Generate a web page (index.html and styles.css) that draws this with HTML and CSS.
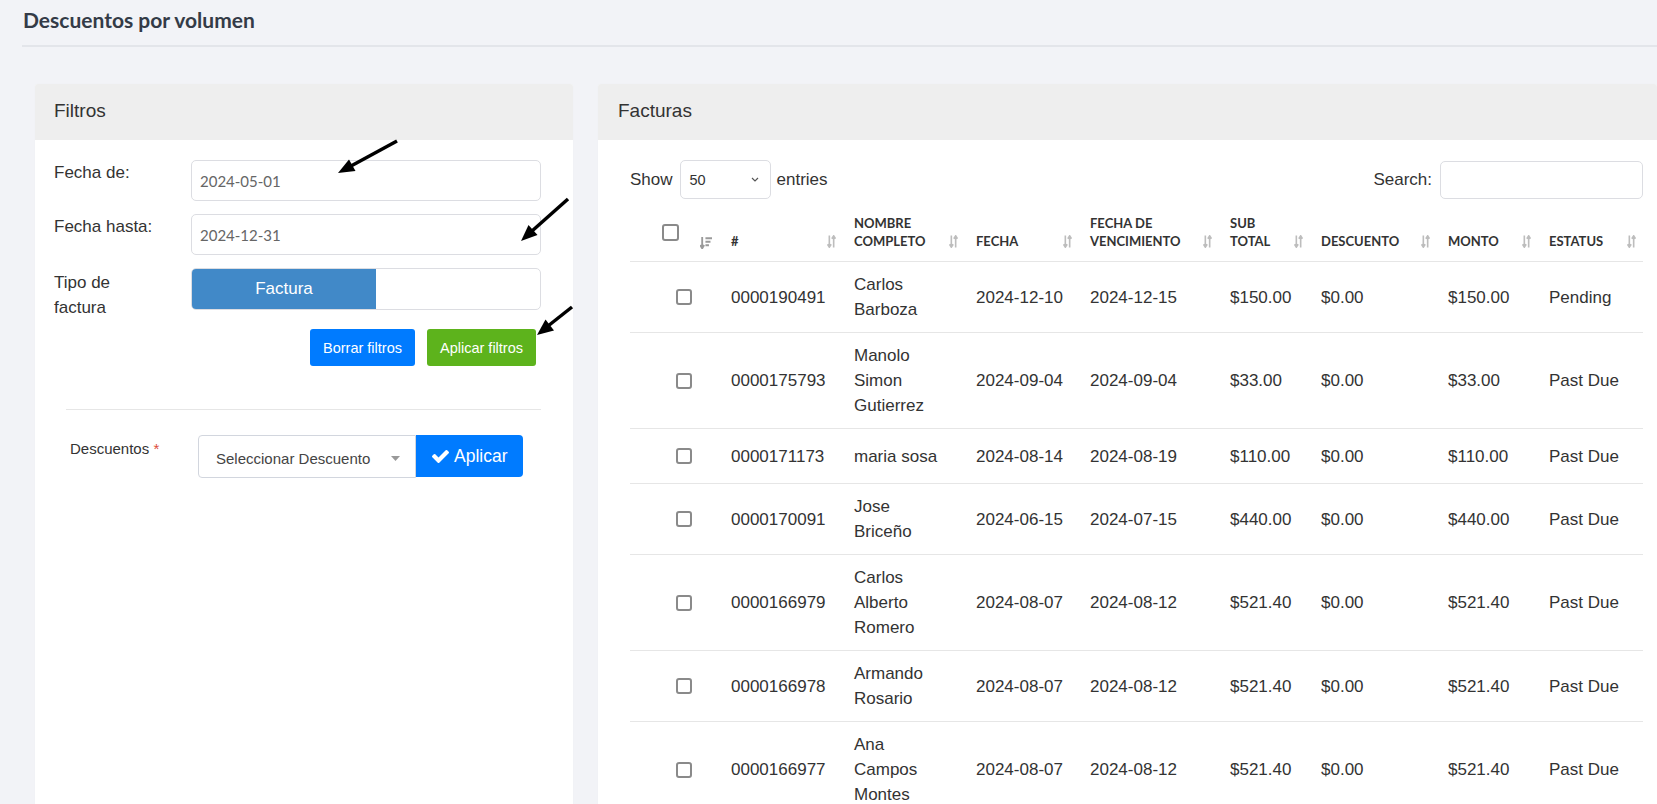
FILE: index.html
```html
<!DOCTYPE html>
<html lang="es">
<head>
<meta charset="utf-8">
<title>Descuentos por volumen</title>
<link rel="stylesheet" href="styles.css">
</head>
<body>
<header class="page-head"><h1 class="page-title">Descuentos por volumen</h1></header>
<main class="content">
  <section class="card">
    <div class="card-head">Filtros</div>
    <div class="card-body filters">
      <div class="frow"><label class="flabel">Fecha de:</label><input class="field" type="text" value="2024-05-01"></div>
      <div class="frow"><label class="flabel">Fecha hasta:</label><input class="field" type="text" value="2024-12-31"></div>
      <div class="frow frow-last"><label class="flabel flabel-2">Tipo de factura</label><div class="toggle"><span class="toggle-on">Factura</span></div></div>
      <div class="btn-row"><button class="btn btn-primary">Borrar filtros</button><button class="btn btn-success">Aplicar filtros</button></div>
      <hr class="sep">
      <div class="disc-row">
        <label class="dlabel">Descuentos <span class="req">*</span></label>
        <div class="sel2"><span>Seleccionar Descuento</span><svg class="sel2-caret" width="9" height="5" viewBox="0 0 9 5"><path d="M0 0H9L4.5 5Z" fill="#999"/></svg></div>
        <button class="btn-apply"><svg class="ico-check" width="17" height="13" viewBox="121 334 1550 1188"><path fill="#fff" d="M1671 566q0 40-28 68l-724 724-136 136q-28 28-68 28t-68-28l-136-136-362-362q-28-28-28-68t28-68l136-136q28-28 68-28t68 28l294 295 656-657q28-28 68-28t68 28l136 136q28 28 28 68z"/></svg>Aplicar</button>
      </div>
    </div>
  </section>
  <section class="card">
    <div class="card-head card-head-wide">Facturas</div>
    <div class="card-body list">
      <div class="dt">
        <div class="dt-top">
          <div class="dt-length">Show <div class="len-select"><span>50</span><svg width="8" height="5" viewBox="0 0 8 5"><path d="M1 1L4 4L7 1" fill="none" stroke="#555" stroke-width="1.2"/></svg></div> entries</div>
          <div class="dt-search">Search: <input class="search-input" type="text"></div>
        </div>
        <table class="dt-table">
          <colgroup>
            <col class="c0"><col class="c1"><col class="c2"><col class="c3"><col class="c4"><col class="c5"><col class="c6"><col class="c7"><col class="c8">
          </colgroup>
          <thead>
            <tr>
              <th class="th-chk"><span class="chk"></span><svg class="sort-desc" viewBox="0 0 11 11"><path d="M2 0V10M0.2 7.4L2 10.4L3.8 7.4" stroke="#9a9a9a" stroke-width="1.7" fill="none"/><path d="M5 1.2h6M5 4.4h4.6M5 7.6h3.2" stroke="#9a9a9a" stroke-width="1.9"/></svg></th>
              <th>#<svg class="sort" viewBox="0 0 8 12"><path d="M2 0.5V11M0.3 8.6L2 11.2L3.7 8.6M6 11.5V1M4.3 3.4L6 0.8L7.7 3.4" fill="none" stroke="#bdbdbd" stroke-width="1.5"/></svg></th>
              <th>Nombre completo<svg class="sort" viewBox="0 0 8 12"><path d="M2 0.5V11M0.3 8.6L2 11.2L3.7 8.6M6 11.5V1M4.3 3.4L6 0.8L7.7 3.4" fill="none" stroke="#bdbdbd" stroke-width="1.5"/></svg></th>
              <th>Fecha<svg class="sort" viewBox="0 0 8 12"><path d="M2 0.5V11M0.3 8.6L2 11.2L3.7 8.6M6 11.5V1M4.3 3.4L6 0.8L7.7 3.4" fill="none" stroke="#bdbdbd" stroke-width="1.5"/></svg></th>
              <th>Fecha de vencimiento<svg class="sort" viewBox="0 0 8 12"><path d="M2 0.5V11M0.3 8.6L2 11.2L3.7 8.6M6 11.5V1M4.3 3.4L6 0.8L7.7 3.4" fill="none" stroke="#bdbdbd" stroke-width="1.5"/></svg></th>
              <th>Sub total<svg class="sort" viewBox="0 0 8 12"><path d="M2 0.5V11M0.3 8.6L2 11.2L3.7 8.6M6 11.5V1M4.3 3.4L6 0.8L7.7 3.4" fill="none" stroke="#bdbdbd" stroke-width="1.5"/></svg></th>
              <th>Descuento<svg class="sort" viewBox="0 0 8 12"><path d="M2 0.5V11M0.3 8.6L2 11.2L3.7 8.6M6 11.5V1M4.3 3.4L6 0.8L7.7 3.4" fill="none" stroke="#bdbdbd" stroke-width="1.5"/></svg></th>
              <th>Monto<svg class="sort" viewBox="0 0 8 12"><path d="M2 0.5V11M0.3 8.6L2 11.2L3.7 8.6M6 11.5V1M4.3 3.4L6 0.8L7.7 3.4" fill="none" stroke="#bdbdbd" stroke-width="1.5"/></svg></th>
              <th>Estatus<svg class="sort" viewBox="0 0 8 12"><path d="M2 0.5V11M0.3 8.6L2 11.2L3.7 8.6M6 11.5V1M4.3 3.4L6 0.8L7.7 3.4" fill="none" stroke="#bdbdbd" stroke-width="1.5"/></svg></th>
            </tr>
          </thead>
          <tbody>
            <tr><td class="td-chk"><span class="chk chk-sm"></span></td><td>0000190491</td><td class="name">Carlos Barboza</td><td>2024-12-10</td><td>2024-12-15</td><td>$150.00</td><td>$0.00</td><td>$150.00</td><td>Pending</td></tr>
            <tr><td class="td-chk"><span class="chk chk-sm"></span></td><td>0000175793</td><td class="name">Manolo Simon Gutierrez</td><td>2024-09-04</td><td>2024-09-04</td><td>$33.00</td><td>$0.00</td><td>$33.00</td><td>Past Due</td></tr>
            <tr><td class="td-chk"><span class="chk chk-sm"></span></td><td>0000171173</td><td class="name">maria sosa</td><td>2024-08-14</td><td>2024-08-19</td><td>$110.00</td><td>$0.00</td><td>$110.00</td><td>Past Due</td></tr>
            <tr><td class="td-chk"><span class="chk chk-sm"></span></td><td>0000170091</td><td class="name">Jose Briceño</td><td>2024-06-15</td><td>2024-07-15</td><td>$440.00</td><td>$0.00</td><td>$440.00</td><td>Past Due</td></tr>
            <tr><td class="td-chk"><span class="chk chk-sm"></span></td><td>0000166979</td><td class="name">Carlos Alberto Romero</td><td>2024-08-07</td><td>2024-08-12</td><td>$521.40</td><td>$0.00</td><td>$521.40</td><td>Past Due</td></tr>
            <tr><td class="td-chk"><span class="chk chk-sm"></span></td><td>0000166978</td><td class="name">Armando Rosario</td><td>2024-08-07</td><td>2024-08-12</td><td>$521.40</td><td>$0.00</td><td>$521.40</td><td>Past Due</td></tr>
            <tr><td class="td-chk"><span class="chk chk-sm"></span></td><td>0000166977</td><td class="name">Ana Campos Montes</td><td>2024-08-07</td><td>2024-08-12</td><td>$521.40</td><td>$0.00</td><td>$521.40</td><td>Past Due</td></tr>
          </tbody>
        </table>
      </div>
    </div>
  </section>
</main>
<svg class="annot" width="1657" height="804" viewBox="0 0 1657 804">
  <g stroke="#000" stroke-width="3.5">
    <line x1="397" y1="141" x2="351" y2="166"/>
    <line x1="568" y1="199" x2="532" y2="231"/>
    <line x1="572" y1="307" x2="548" y2="326"/>
  </g>
  <g fill="#000">
    <polygon points="338,173 355.5,171 349,159.5"/>
    <polygon points="521,241 537.5,235 528.5,225"/>
    <polygon points="537,335 554,330.5 545.5,319.5"/>
  </g>
</svg>
</body>
</html>
```

FILE: styles.css
```css
html, body {
  margin: 0;
  height: 804px;
  overflow: hidden;
}

body {
  position: relative;
  background: #f2f3f7;
  font-family: "Liberation Sans", Arial, sans-serif;
  color: #333;
}

.page-head {
  margin-left: 22px;
  height: 47px;
  box-sizing: border-box;
  border-bottom: 2px solid #e3e5ea;
}

.page-title {
  margin: 0;
  padding: 7px 0 0 1px;
  font-family: Lato, "Liberation Sans", sans-serif;
  font-weight: 700;
  font-size: 21px;
  line-height: 26px;
  color: #343b47;
}

.content {
  display: grid;
  grid-template-columns: 538px 1fr;
  column-gap: 25px;
  padding-left: 35px;
  margin-top: 37px;
}

.card {
  background: #fff;
  border-radius: 3px 3px 0 0;
  min-height: 760px;
  box-shadow: 0 0 1px rgba(0, 0, 0, 0.06);
}

.card-head {
  height: 56px;
  box-sizing: border-box;
  padding: 0 0 3px 19px;
  background: #eeeeee;
  border-radius: 3px 3px 0 0;
  display: flex;
  align-items: center;
  font-size: 19px;
  color: #333;
}

.card-head-wide {
  padding-left: 20px;
}

/* Filters */
.filters {
  padding: 20px 32px 0 19px;
}

.frow {
  display: grid;
  grid-template-columns: 137px 1fr;
  margin-bottom: 13px;
}

.frow-last {
  margin-bottom: 9px;
}

.flabel {
  width: 106px;
  font-size: 17px;
  line-height: 25px;
  color: #333;
}

.flabel-2 {
  padding-top: 2px;
}

.field {
  box-sizing: border-box;
  width: 100%;
  height: 41px;
  margin: 0;
  padding: 0 8px;
  border: 1px solid #dcdde2;
  border-radius: 5px;
  background: #fff;
  font-family: Lato, "Liberation Sans", sans-serif;
  font-size: 15px;
  color: #666;
  outline: none;
}

.toggle {
  height: 42px;
  box-sizing: border-box;
  border: 1px solid #dcdde2;
  border-radius: 5px;
  overflow: hidden;
  display: flex;
  background: #fff;
}

.toggle-on {
  width: 184px;
  background: #4189c8;
  color: #fff;
  font-size: 17px;
  display: flex;
  align-items: center;
  justify-content: center;
}

.btn-row {
  display: flex;
  justify-content: flex-end;
  gap: 12px;
  padding-right: 5px;
}

.btn {
  height: 37px;
  padding: 0 13px;
  border: none;
  border-radius: 3px;
  font-family: "Liberation Sans", Arial, sans-serif;
  font-size: 14.5px;
  color: #fff;
}

.btn-primary {
  background: #007bff;
}

.btn-success {
  background: #5db31c;
}

.sep {
  border: 0;
  border-top: 1px solid #e6e6e6;
  margin: 43px 0 0 12px;
}

.disc-row {
  display: flex;
  align-items: flex-start;
  margin-top: 25px;
  padding-left: 16px;
}

.dlabel {
  width: 128px;
  padding-top: 1px;
  font-size: 15px;
  line-height: 25px;
  color: #333;
}

.req {
  color: #dd4b39;
}

.sel2 {
  box-sizing: border-box;
  width: 218px;
  height: 43px;
  border: 1px solid #d2d6de;
  border-radius: 4px 0 0 4px;
  display: flex;
  align-items: center;
  justify-content: space-between;
  padding: 3px 15px 0 17px;
  font-size: 15px;
  color: #444;
}

.btn-apply {
  width: 107px;
  height: 42px;
  display: flex;
  align-items: center;
  gap: 5px;
  padding: 0 0 0 16px;
  border: none;
  border-radius: 0 4px 4px 0;
  background: #007bff;
  color: #fff;
  font-family: "Liberation Sans", Arial, sans-serif;
  font-size: 17.5px;
}

/* Facturas */
.list {
  padding: 20px 0 0 32px;
}

.dt {
  width: 1013px;
}

.dt-top {
  display: flex;
  justify-content: space-between;
  align-items: center;
  height: 39px;
  font-size: 17px;
}

.dt-length,
.dt-search {
  display: flex;
  align-items: center;
}

.len-select {
  box-sizing: border-box;
  width: 91px;
  height: 39px;
  margin: 0 6px 0 7px;
  padding: 0 11px 0 9px;
  border: 1px solid #dcdde2;
  border-radius: 5px;
  display: flex;
  align-items: center;
  justify-content: space-between;
  font-size: 14.5px;
  color: #333;
}

.search-input {
  box-sizing: border-box;
  width: 203px;
  height: 38px;
  margin: 0 0 0 8px;
  border: 1px solid #dcdde2;
  border-radius: 5px;
  outline: none;
}

.dt-table {
  width: 1013px;
  table-layout: fixed;
  border-collapse: collapse;
  margin-top: 7px;
}

.c0 { width: 90px; }
.c1 { width: 123px; }
.c2 { width: 122px; }
.c3 { width: 114px; }
.c4 { width: 140px; }
.c5 { width: 91px; }
.c6 { width: 127px; }
.c7 { width: 101px; }
.c8 { width: 105px; }

.dt-table th {
  position: relative;
  padding: 8px 32px 11px 11px;
  text-align: left;
  vertical-align: bottom;
  font-family: Lato, "Liberation Sans", sans-serif;
  font-weight: 700;
  font-size: 13px;
  line-height: 18px;
  text-transform: uppercase;
  color: #333;
  border-bottom: 1px solid #e6e6e6;
}

.sort {
  position: absolute;
  right: 7px;
  bottom: 13px;
  width: 9px;
  height: 13px;
}

.dt-table th.th-chk {
  padding: 0 0 20px 32px;
}

.sort-desc {
  position: absolute;
  left: 70px;
  bottom: 12px;
  width: 12px;
  height: 12px;
}

.chk {
  display: block;
  width: 17px;
  height: 17px;
  box-sizing: border-box;
  border: 2px solid #8a8a8a;
  border-radius: 3px;
  background: #fff;
}

.chk-sm {
  width: 16px;
  height: 16px;
}

.dt-table tbody tr {
  height: 55px;
}

.dt-table td {
  padding: 10px 11px;
  font-size: 17px;
  line-height: 25px;
  color: #333;
  vertical-align: middle;
  white-space: nowrap;
  border-bottom: 1px solid #e6e6e6;
}

.dt-table td.td-chk {
  padding-left: 46px;
}

.dt-table td.name {
  white-space: normal;
  padding-right: 20px;
}

.annot {
  position: absolute;
  left: 0;
  top: 0;
  pointer-events: none;
}
```
